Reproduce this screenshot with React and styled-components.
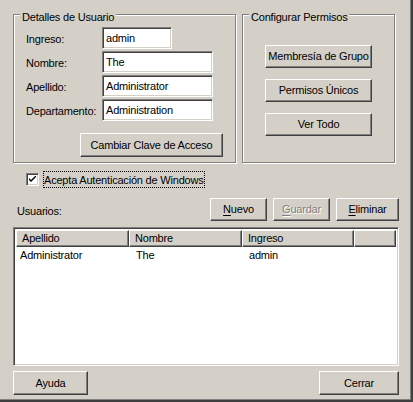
import React from 'react';
import styled, { createGlobalStyle } from 'styled-components';

const Global = createGlobalStyle`
  html, body { margin: 0; padding: 0; background: #D4D0C8; }
  body {
    font-family: "Liberation Sans", Arial, sans-serif;
    font-size: 11px;
    letter-spacing: -0.2px;
    color: #000;
  }
  * { box-sizing: border-box; }
`;

const Window = styled.div`
  width: 413px;
  height: 402px;
  background: #D4D0C8;
  box-shadow: inset -1px -1px #404040, inset -2px -2px #404040, inset -3px -3px #808080;
  padding: 14px 14px 0 13px;
  display: flex;
  flex-direction: column;
`;

const TopRow = styled.div`
  display: flex;
  gap: 6px;
`;

const GroupBox = styled.div`
  position: relative;
  width: ${p => p.$w}px;
  height: 149px;
  border: 1px solid #808080;
  box-shadow: inset 1px 1px #fff, 1px 1px #fff;
`;

const GroupTitle = styled.span`
  position: absolute;
  top: -4px;
  left: 6px;
  padding: 0 2px;
  line-height: 13px;
  background: #D4D0C8;
  white-space: nowrap;
`;

const FieldGrid = styled.div`
  display: grid;
  grid-template-columns: 76px auto;
  row-gap: 2px;
  padding: 12px 0 0 12px;
`;

const Label = styled.label`
  align-self: center;
  padding-top: 2px;
  line-height: 13px;
`;

const TextField = styled.div`
  width: ${p => p.$w}px;
  height: 22px;
  background: #fff;
  border: 1px solid;
  border-color: #808080 #fff #fff #808080;
  box-shadow: inset 1px 1px #404040, inset -1px -1px #D4D0C8;
  padding: 0 3px;
  display: flex;
  align-items: center;
  line-height: 13px;
  white-space: nowrap;
`;

const ButtonRowRight = styled.div`
  display: flex;
  justify-content: flex-end;
  padding-right: 12px;
  margin-top: 12px;
`;

const Button = styled.div`
  width: ${p => p.$w}px;
  height: ${p => p.$h || 23}px;
  border: 1px solid;
  border-color: #fff #404040 #404040 #fff;
  box-shadow: inset -1px -1px #808080;
  display: flex;
  align-items: center;
  justify-content: center;
  line-height: 13px;
  white-space: nowrap;
  color: ${p => (p.$disabled ? '#808080' : '#000')};
  text-shadow: ${p => (p.$disabled ? '1px 1px #fff' : 'none')};
  u { text-decoration: underline; text-underline-offset: 2px; }
`;

const ButtonColumn = styled.div`
  display: flex;
  flex-direction: column;
  align-items: center;
  gap: 11px;
  padding-top: 30px;
`;

const CheckRow = styled.div`
  display: flex;
  align-items: center;
  margin-top: 8px;
  padding-left: 13px;
  height: 17px;
`;

const CheckBox = styled.div`
  width: 13px;
  height: 13px;
  background: #fff;
  border: 1px solid;
  border-color: #808080 #fff #fff #808080;
  box-shadow: inset 1px 1px #404040, inset -1px -1px #D4D0C8;
  display: flex;
  align-items: center;
  justify-content: center;
`;

const CheckLabel = styled.span`
  margin-left: 4px;
  height: 17px;
  padding: 0 1px;
  outline: 1px dotted #000;
  outline-offset: -1px;
  display: flex;
  align-items: center;
  white-space: nowrap;
`;

const UsersRow = styled.div`
  display: flex;
  align-items: center;
  margin-top: 10px;
  padding-left: 4px;
`;

const UsersLabel = styled.span`
  flex: 1;
  padding-top: 2px;
`;

const UsersButtons = styled.div`
  display: flex;
  gap: 6px;
`;

const ListView = styled.div`
  margin-top: 6px;
  height: 139px;
  background: #fff;
  border: 1px solid;
  border-color: #808080 #fff #fff #808080;
  box-shadow: inset 1px 1px #404040, inset -1px -1px #D4D0C8;
  padding: 2px 2px 2px 2px;
  display: flex;
  flex-direction: column;
`;

const HeaderRow = styled.div`
  display: flex;
  height: 17px;
`;

const HeaderCell = styled.div`
  width: ${p => (p.$w ? `${p.$w}px` : 'auto')};
  flex: ${p => (p.$w ? '0 0 auto' : '1')};
  border: 1px solid;
  border-color: #fff #404040 #404040 #fff;
  box-shadow: inset -1px -1px #808080;
  background: #D4D0C8;
  padding-left: 5px;
  display: flex;
  align-items: center;
  line-height: 13px;
`;

const DataRow = styled.div`
  display: flex;
  height: 15px;
  margin-top: 2px;
`;

const DataCell = styled.div`
  width: ${p => p.$w}px;
  padding-left: ${p => p.$pl}px;
  line-height: 13px;
  white-space: nowrap;
`;

const BottomRow = styled.div`
  display: flex;
  justify-content: space-between;
  margin-top: 5px;
`;

const Check = () => (
  <svg width="7" height="7" viewBox="0 0 7 7">
    <path d="M0 2 L0 4 L2 6 L7 1 L7 -1 L2 4 Z" fill="#000" />
  </svg>
);

export default function App() {
  return (
    <>
      <Global />
      <Window>
        <TopRow>
          <GroupBox $w={223}>
            <GroupTitle>Detalles de Usuario</GroupTitle>
            <FieldGrid>
              <Label>Ingreso:</Label>
              <TextField $w={70}>admin</TextField>
              <Label>Nombre:</Label>
              <TextField $w={111}>The</TextField>
              <Label>Apellido:</Label>
              <TextField $w={111}>Administrator</TextField>
              <Label>Departamento:</Label>
              <TextField $w={111}>Administration</TextField>
            </FieldGrid>
            <ButtonRowRight>
              <Button $w={143} $h={24}>Cambiar Clave de Acceso</Button>
            </ButtonRowRight>
          </GroupBox>
          <GroupBox $w={153}>
            <GroupTitle>Configurar Permisos</GroupTitle>
            <ButtonColumn>
              <Button $w={107}>Membresía de Grupo</Button>
              <Button $w={107}>Permisos Únicos</Button>
              <Button $w={107}>Ver Todo</Button>
            </ButtonColumn>
          </GroupBox>
        </TopRow>

        <CheckRow>
          <CheckBox><Check /></CheckBox>
          <CheckLabel>Acepta Autenticación de Windows</CheckLabel>
        </CheckRow>

        <UsersRow>
          <UsersLabel>Usuarios:</UsersLabel>
          <UsersButtons>
            <Button $w={57}><span><u>N</u>uevo</span></Button>
            <Button $w={57} $disabled><span><u>G</u>uardar</span></Button>
            <Button $w={63}><span><u>E</u>liminar</span></Button>
          </UsersButtons>
        </UsersRow>

        <ListView>
          <HeaderRow>
            <HeaderCell $w={113}>Apellido</HeaderCell>
            <HeaderCell $w={113}>Nombre</HeaderCell>
            <HeaderCell $w={112}>Ingreso</HeaderCell>
            <HeaderCell />
          </HeaderRow>
          <DataRow>
            <DataCell $w={113} $pl={4}>Administrator</DataCell>
            <DataCell $w={113} $pl={7}>The</DataCell>
            <DataCell $w={112} $pl={7}>admin</DataCell>
          </DataRow>
        </ListView>

        <BottomRow>
          <Button $w={75} $h={24}>Ayuda</Button>
          <Button $w={80} $h={24}>Cerrar</Button>
        </BottomRow>
      </Window>
    </>
  );
}
